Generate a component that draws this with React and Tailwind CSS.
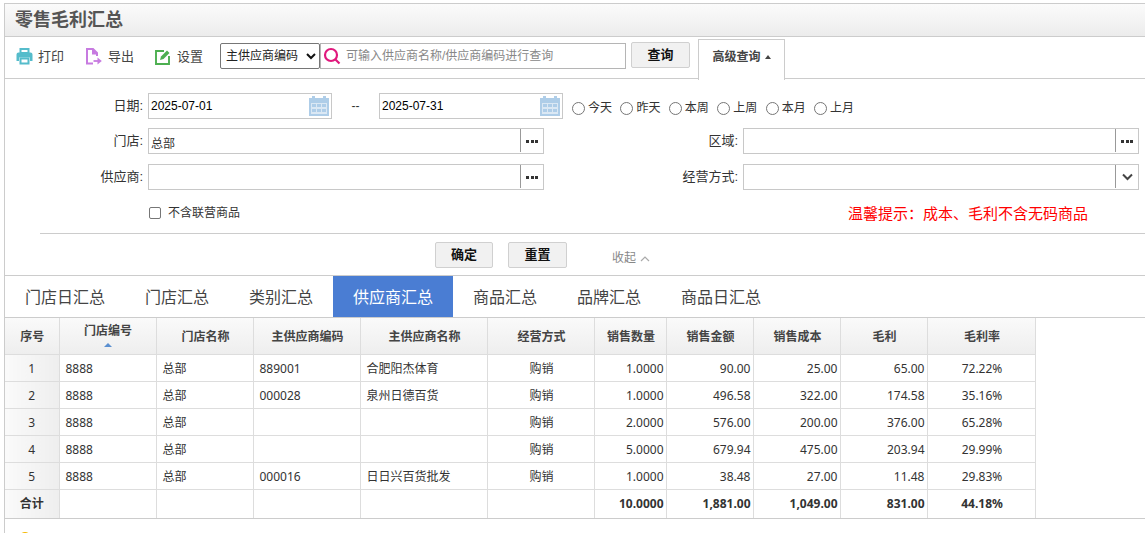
import React from "react";

const rows = [
  ["1", "8888", "总部", "889001", "合肥阳杰体育", "购销", "1.0000", "90.00", "25.00", "65.00", "72.22%"],
  ["2", "8888", "总部", "000028", "泉州日德百货", "购销", "1.0000", "496.58", "322.00", "174.58", "35.16%"],
  ["3", "8888", "总部", "", "", "购销", "2.0000", "576.00", "200.00", "376.00", "65.28%"],
  ["4", "8888", "总部", "", "", "购销", "5.0000", "679.94", "475.00", "203.94", "29.99%"],
  ["5", "8888", "总部", "000016", "日日兴百货批发", "购销", "1.0000", "38.48", "27.00", "11.48", "29.83%"],
];

const heads = ["门店名称", "主供应商编码", "主供应商名称", "经营方式", "销售数量", "销售金额", "销售成本", "毛利", "毛利率"];
const tabs = ["门店日汇总", "门店汇总", "类别汇总", "供应商汇总", "商品汇总", "品牌汇总", "商品日汇总"];
const ranges = ["今天", "昨天", "本周", "上周", "本月", "上月"];

const cjk = "font-['Liberation_Sans','Noto_Sans_CJK_SC',sans-serif]";

function PrintIcon() {
  return (
    <svg width="17" height="17" viewBox="0 0 17 17">
      <path d="M4.5 1h8v4h-8z" fill="none" stroke="#55bccb" strokeWidth="2" />
      <path d="M2.5 4.5h12a2 2 0 0 1 2 2V13H14V9.5H3V13H.5V6.5a2 2 0 0 1 2-2z" fill="#55bccb" />
      <path d="M4.5 10.5h8V15.5h-8z" fill="none" stroke="#55bccb" strokeWidth="2" />
    </svg>
  );
}

function ExportIcon() {
  return (
    <svg width="16" height="17" viewBox="0 0 16 17" fill="none" stroke="#c77be0" strokeWidth="2">
      <path d="M7 15.5H1V1h6l4 4v3" />
      <path d="M7 1v4.5h4" fill="#c77be0" />
      <path d="M7.5 13h6.5" strokeWidth="1.8" />
      <path d="M11.5 9.5L15.8 13l-4.3 3.5z" fill="#c77be0" stroke="none" />
    </svg>
  );
}

function SettingIcon() {
  return (
    <svg width="16" height="16" viewBox="0 0 16 16" fill="none">
      <path d="M9 2H1v13h13V7" stroke="#4caf50" strokeWidth="1.9" />
      <path d="M5 11l1-3.5L12 1.5 14.5 4l-6 6z" fill="#4caf50" />
    </svg>
  );
}

function CalendarIcon() {
  return (
    <svg width="20" height="20" viewBox="0 0 20 20">
      <path d="M0 2h3V0h3v2h8V0h3v2h3v20H0z" fill="#aecde8" />
      <path d="M2 7h16v11H2z" fill="#dbe8f4" />
      <path d="M3 8h4v3H3zM8 8h4v3H8zM13 8h4v3h-4zM3 13h4v3H3zM8 13h4v3H8zM13 13h4v3h-4z" fill="#aecde8" />
    </svg>
  );
}

function DateInput({ value }) {
  return (
    <div className="flex items-center justify-between w-[184px] h-[26px] border border-[#c8c8c8] pl-0.5 pr-[2px] text-[12px] text-black">
      <span>{value}</span>
      <CalendarIcon />
    </div>
  );
}

function PickInput({ value, chevron, className }) {
  return (
    <div className={"flex h-[26px] border border-[#c8c8c8] text-[12px] text-[#333] " + className}>
      <div className="flex-1 pl-[2px] pt-1.5 border-r border-[#999] mb-[1px]">{value}</div>
      <div className="w-[22px] flex items-center justify-center">
        {chevron ? (
          <svg width="11" height="8" viewBox="0 0 11 8">
            <path d="M1 1.5l4.5 4.5L10 1.5" fill="none" stroke="#444" strokeWidth="2" />
          </svg>
        ) : (
          <span className="flex gap-[1.5px]">
            <i className="w-[3px] h-[3px] bg-[#333]" />
            <i className="w-[3px] h-[3px] bg-[#333]" />
            <i className="w-[3px] h-[3px] bg-[#333]" />
          </span>
        )}
      </div>
    </div>
  );
}

function GrayButton({ children, className }) {
  return (
    <button className={"h-[26px] border border-[#d0d0d0] rounded-[2px] bg-[#f1f1f1] text-[13px] font-bold text-[#111] " + className}>
      {children}
    </button>
  );
}

export default function App() {
  return (
    <div className={"h-[533px] overflow-hidden pt-[3px] pl-1 bg-white text-[12px] text-[#333] " + cjk}>
      <div className="border-l border-t border-[#ccc]">
        {/* TITLE */}
        <div className="h-[33px] pl-[10px] flex items-center border-b border-[#ccc] bg-gradient-to-b from-[#fbfbfb] to-[#ececec]">
          <h1 className="text-[18px] font-bold text-[#555]">零售毛利汇总</h1>
        </div>

        {/* TOOLBAR */}
        <div className="h-[42px] flex border-b border-[#ccc] text-[13px] text-[#444]">
          <div className="flex items-center gap-[5px] ml-[11px] w-[70px] -mt-0.5">
            <PrintIcon />
            <span>打印</span>
          </div>
          <div className="flex items-center gap-[6px] w-[69px] -mt-0.5">
            <ExportIcon />
            <span>导出</span>
          </div>
          <div className="flex items-center gap-1.5 w-[65px] -mt-0.5">
            <SettingIcon />
            <span>设置</span>
          </div>
          <div className="flex items-center -mt-[3px]">
            <div className="flex items-center justify-between w-[100px] h-[26px] border border-[#767676] rounded-[2px] pl-[5px] pr-[3px] text-[12px] text-[#222]">
              <span>主供应商编码</span>
              <svg width="10" height="7" viewBox="0 0 10 7">
                <path d="M1 1l4 4 4-4" fill="none" stroke="#111" strokeWidth="2" />
              </svg>
            </div>
            <div className="flex items-center w-[306px] h-[26px] border border-[#b5b5b5] pl-0.5 text-[12px] text-[#888]">
              <svg width="18" height="18" viewBox="0 0 18 18" className="mr-[5px]">
                <circle cx="8" cy="8" r="6" fill="none" stroke="#e0197d" strokeWidth="2.2" />
                <path d="M12 12l4.5 4.5" stroke="#e0197d" strokeWidth="2.2" />
              </svg>
              <span>可输入供应商名称/供应商编码进行查询</span>
            </div>
            <GrayButton className="w-[59px] ml-[5px] -mt-0.5">查询</GrayButton>
          </div>
          <div className="flex items-center justify-center gap-1 w-[87px] h-[41px] ml-2 mt-[2px] pb-[7px] border border-b-0 border-[#ccc] bg-white text-[12px] font-bold text-[#444] z-10">
            <span>高级查询</span>
            <i className="border-x-[3.5px] border-b-[4px] border-x-transparent border-b-[#444]" />
          </div>
        </div>

        {/* FILTER FORM */}
        <div className="h-[197px] border-b border-[#ccc] flex flex-col pt-[14px]">
          <div className="flex items-center h-[26px]">
            <label className="w-[138px] mr-[5px] text-right text-[13px]">日期:</label>
            <DateInput value="2025-07-01" />
            <span className="w-[47px] text-center">--</span>
            <DateInput value="2025-07-31" />
            <div className="flex items-center ml-[9px] gap-[8.4px] mt-[3px]">
              {ranges.map((r) => (
                <label key={r} className="flex items-center gap-[3px]">
                  <i className="w-[13px] h-[13px] rounded-full border border-[#767676] bg-white mt-0.5" />
                  <span>{r}</span>
                </label>
              ))}
            </div>
          </div>

          <div className="flex items-center h-[26px] mt-[9px]">
            <label className="w-[138px] mr-[5px] text-right text-[13px]">门店:</label>
            <PickInput value="总部" className="w-[396px]" />
            <label className="w-[194px] mr-[5px] text-right text-[13px]">区域:</label>
            <PickInput className="w-[396px]" />
          </div>

          <div className="flex items-center h-[26px] mt-[10px]">
            <label className="w-[138px] mr-[5px] text-right text-[13px]">供应商:</label>
            <PickInput className="w-[396px]" />
            <label className="w-[194px] mr-[5px] text-right text-[13px]">经营方式:</label>
            <PickInput chevron className="w-[396px]" />
          </div>

          <div className="flex items-center justify-between h-[24px] mt-[11px]">
            <div className="flex items-center gap-[7px] ml-[144px]">
              <i className="w-[12px] h-[12px] rounded-[2px] border border-[#767676]" />
              <span>不含联营商品</span>
            </div>
            <span className="mr-[57px] mt-[3px] text-[15px] text-[#ff0000]">温馨提示：成本、毛利不含无码商品</span>
          </div>

          <div className="ml-[35px] mt-[8px] border-t border-[#ccc]" />

          <div className="flex items-center mt-2 ml-[430px]">
            <GrayButton className="w-[58px]">确定</GrayButton>
            <GrayButton className="w-[59px] ml-[15px]">重置</GrayButton>
            <span className="ml-[45px] mt-[5px] text-[#888]">收起</span>
            <svg width="10" height="6" viewBox="0 0 10 6" className="ml-1 mt-[7px]">
              <path d="M1 5l4-4 4 4" fill="none" stroke="#aaa" strokeWidth="1.2" />
            </svg>
          </div>
        </div>

        {/* TABS */}
        <div className="flex h-[42px] border-b border-[#ccc]">
          {tabs.map((t) => (
            <div
              key={t}
              className={
                t === "供应商汇总"
                  ? "px-5 h-[41px] leading-[43px] text-[16px] text-white bg-[#4a7dd3]"
                  : "px-5 h-[41px] leading-[43px] text-[16px] text-[#444]"
              }
            >
              {t}
            </div>
          ))}
        </div>

        {/* TABLE */}
        <div className="border-b border-[#ccc]">
          <table className="table-fixed border-collapse w-[1030px] font-['Noto_Sans','Noto_Sans_CJK_SC',sans-serif]">
            <colgroup>
              <col className="w-[54px]" />
              <col className="w-[97px]" />
              <col className="w-[97px]" />
              <col className="w-[107px]" />
              <col className="w-[127px]" />
              <col className="w-[107px]" />
              <col className="w-[72px]" />
              <col className="w-[87px]" />
              <col className="w-[87px]" />
              <col className="w-[87px]" />
              <col className="w-[108px]" />
            </colgroup>
            <thead>
              <tr className="h-[36px] bg-gradient-to-b from-[#fafafa] to-[#eeeeee] text-[#444]">
                <th className="border-r border-[#ddd] font-bold pl-[1px] pt-[2px]">序号</th>
                <th className="border-r border-[#ddd] font-bold pl-[1px]">
                  <div className="flex flex-col items-center gap-[5px]">
                    <span className="leading-[14px]">门店编号</span>
                    <i className="border-x-[4px] border-b-[4px] border-x-transparent border-b-[#5a8fd0]" />
                  </div>
                </th>
                {heads.map((h) => (
                  <th key={h} className="border-r border-[#ddd] font-bold pl-[2px] pt-[2px]">{h}</th>
                ))}
              </tr>
            </thead>
            <tbody>
              {rows.map((r) => (
                <tr key={r[0]} className="h-[27px] [&>td]:pt-[2px]">
                  <td className="border border-l-0 border-[#ddd] text-center bg-gradient-to-r from-[#fafafa] to-[#eeeeee]">{r[0]}</td>
                  <td className="border border-[#ddd] pl-[6px]">{r[1]}</td>
                  <td className="border border-[#ddd] pl-[6px]">{r[2]}</td>
                  <td className="border border-[#ddd] pl-[6px]">{r[3]}</td>
                  <td className="border border-[#ddd] pl-[6px]">{r[4]}</td>
                  <td className="border border-[#ddd] text-center pl-[2px]">{r[5]}</td>
                  <td className="border border-[#ddd] text-right pr-[2px]">{r[6]}</td>
                  <td className="border border-[#ddd] text-right pr-[2px]">{r[7]}</td>
                  <td className="border border-[#ddd] text-right pr-[2px]">{r[8]}</td>
                  <td className="border border-[#ddd] text-right pr-[2px]">{r[9]}</td>
                  <td className="border border-[#ddd] text-center pl-[2px]">{r[10]}</td>
                </tr>
              ))}
              <tr className="h-[29px] font-bold [&>td]:pt-[1px]">
                <td className="border-r border-t border-[#ddd] text-center bg-gradient-to-r from-[#fafafa] to-[#eeeeee]">合计</td>
                <td className="border-x border-t border-[#ddd]" />
                <td className="border-x border-t border-[#ddd]" />
                <td className="border-x border-t border-[#ddd]" />
                <td className="border-x border-t border-[#ddd]" />
                <td className="border-x border-t border-[#ddd]" />
                <td className="border-x border-t border-[#ddd] text-right pr-[2px]">10.0000</td>
                <td className="border-x border-t border-[#ddd] text-right pr-[2px]">1,881.00</td>
                <td className="border-x border-t border-[#ddd] text-right pr-[2px]">1,049.00</td>
                <td className="border-x border-t border-[#ddd] text-right pr-[2px]">831.00</td>
                <td className="border-x border-t border-[#ddd] text-center pl-[2px]">44.18%</td>
              </tr>
            </tbody>
          </table>
        </div>

        <div className="pl-[14px] pt-[13px]">
          <i className="block w-[12px] h-[12px] rounded-full bg-[#f5b800]" />
        </div>
      </div>
    </div>
  );
}
